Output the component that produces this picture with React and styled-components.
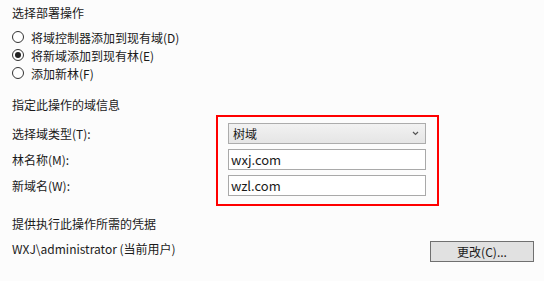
import React from 'react'
import styled, { createGlobalStyle } from 'styled-components'

const Global = createGlobalStyle`
    body {
        margin : 0;
        background : #fcfcfc;
        font-family : "Noto Sans CJK SC", "Noto Sans", sans-serif;
        font-size : 12px;
        color : #1a1a1a;
    }
`
const Page = styled.div`
    width : 544px;
    height : 281px;
    box-sizing : border-box;
    padding : 4px 10px 0 12px;
`
const Heading = styled.div`
    line-height : 18px;
    margin-top : ${p => p.$top || 0}px;
`
const RadioList = styled.div`
    margin-top : 6px;
`
const RadioRow = styled.label`
    display : flex;
    align-items : center;
    height : 18px;
    gap : 7px;
`
const Circle = styled.span`
    width : 12px;
    height : 12px;
    box-sizing : border-box;
    border : 1px solid #333;
    border-radius : 50%;
    background : #fff;
    display : flex;
    align-items : center;
    justify-content : center;
    &::after{
        content : '';
        width : 6px;
        height : 6px;
        border-radius : 50%;
        background : ${p => p.$checked ? '#222' : 'transparent'};
    }
`
const FormRow = styled.div`
    display : flex;
    margin-top : 1px;
`
const Labels = styled.div`
    width : 204px;
    padding-top : 6px;
`
const LabelRow = styled.div`
    line-height : 26px;
`
const Highlight = styled.div`
    width : 223px;
    box-sizing : border-box;
    border : 2px solid #ff0000;
    padding : 6px 11px 8px 10px;
    display : flex;
    flex-direction : column;
    gap : 5px;
`
const Select = styled.div`
    height : 21px;
    box-sizing : border-box;
    border : 1px solid #acacac;
    background : linear-gradient(#f2f2f2, #e5e5e5);
    display : flex;
    align-items : center;
    justify-content : space-between;
    padding : 0 6px 0 4px;
`
const Input = styled.div`
    height : 21px;
    box-sizing : border-box;
    border : 1px solid #a9a9a9;
    background : #fff;
    padding : 0 2px;
    font-size : 13px;
    line-height : 19px;
`
const UserRow = styled.div`
    display : flex;
    justify-content : space-between;
    margin-top : 8px;
`
const UserText = styled.div`
    line-height : 16px;
`
const Button = styled.div`
    width : 104px;
    height : 21px;
    box-sizing : border-box;
    border : 1px solid #707070;
    background : #e1e1e1;
    text-align : center;
    line-height : 19px;
`

const radios = [
    { text : '将域控制器添加到现有域(D)', checked : false },
    { text : '将新域添加到现有林(E)', checked : true },
    { text : '添加新林(F)', checked : false },
]

function App(){
    return(
        <Page>
            <Global/>
            <Heading>选择部署操作</Heading>
            <RadioList>
                {radios.map(r => (
                    <RadioRow key={r.text}>
                        <Circle $checked={r.checked}/>
                        {r.text}
                    </RadioRow>
                ))}
            </RadioList>
            <Heading $top={14}>指定此操作的域信息</Heading>
            <FormRow>
                <Labels>
                    <LabelRow>选择域类型(T):</LabelRow>
                    <LabelRow>林名称(M):</LabelRow>
                    <LabelRow>新域名(W):</LabelRow>
                </Labels>
                <Highlight>
                    <Select>
                        树域
                        <svg width="7" height="5" viewBox="0 0 7 5">
                            <path d="M1 1 L3.5 3.5 L6 1" fill="none" stroke="#555" strokeWidth="1.2"/>
                        </svg>
                    </Select>
                    <Input>wxj.com</Input>
                    <Input>wzl.com</Input>
                </Highlight>
            </FormRow>
            <Heading $top={9}>提供执行此操作所需的凭据</Heading>
            <UserRow>
                <UserText>WXJ\administrator (当前用户)</UserText>
                <Button>更改(C)...</Button>
            </UserRow>
        </Page>
    )
}

export default App
